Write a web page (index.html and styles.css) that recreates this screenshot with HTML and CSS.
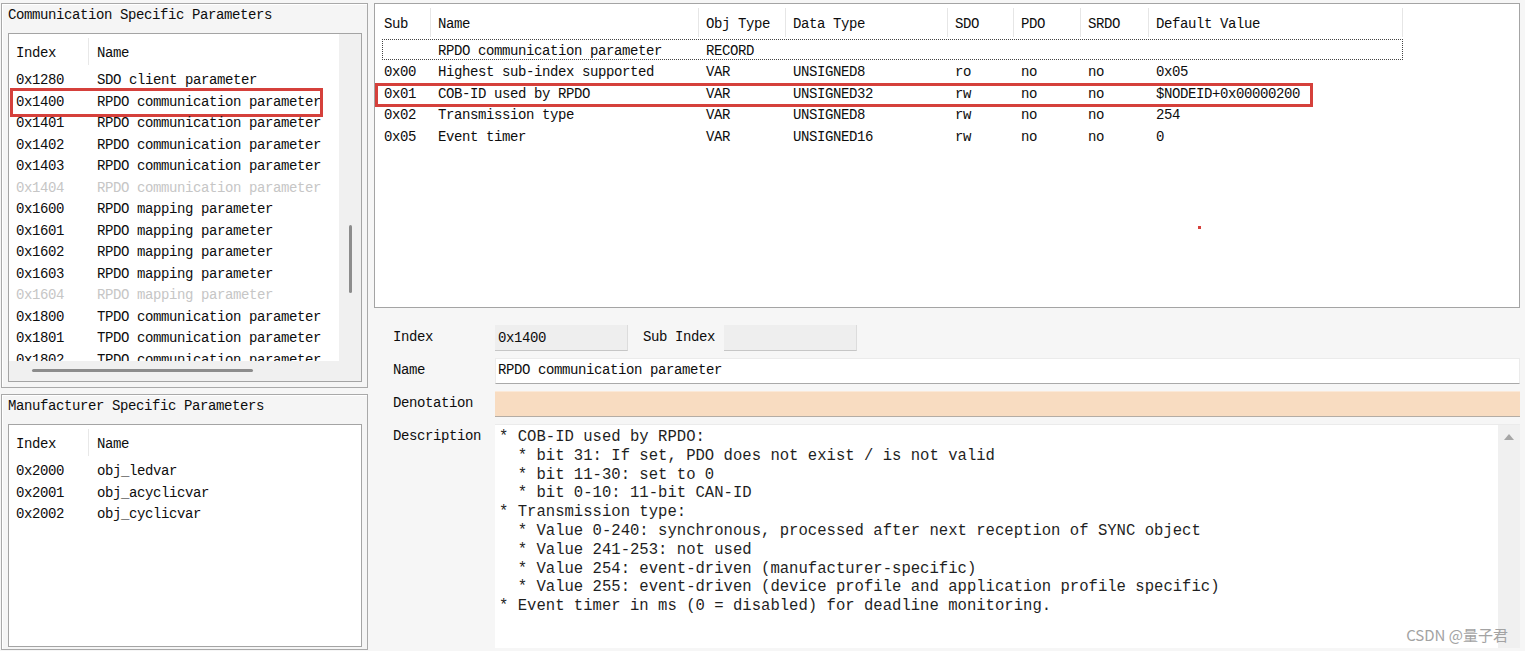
FILE: index.html
```html
<!DOCTYPE html>
<html lang="en">
<head>
<meta charset="utf-8">
<title>Object Dictionary</title>
<link rel="stylesheet" href="styles.css">
</head>
<body>
<div class="app">
  <aside class="left">
    <section class="group g1">
      <div class="gtitle">Communication Specific Parameters</div>
      <div class="listbox">
        <div class="lb-main">
          <div class="lb-head"><span class="h-idx">Index</span><span class="h-sep"></span><span class="h-name">Name</span></div>
          <div class="lb-row"><span class="i">0x1280</span><span>SDO client parameter</span></div>
          <div class="lb-row"><span class="i">0x1400</span><span>RPDO communication parameter</span><span class="mark mark-left"></span></div>
          <div class="lb-row"><span class="i">0x1401</span><span>RPDO communication parameter</span></div>
          <div class="lb-row"><span class="i">0x1402</span><span>RPDO communication parameter</span></div>
          <div class="lb-row"><span class="i">0x1403</span><span>RPDO communication parameter</span></div>
          <div class="lb-row dim"><span class="i">0x1404</span><span>RPDO communication parameter</span></div>
          <div class="lb-row"><span class="i">0x1600</span><span>RPDO mapping parameter</span></div>
          <div class="lb-row"><span class="i">0x1601</span><span>RPDO mapping parameter</span></div>
          <div class="lb-row"><span class="i">0x1602</span><span>RPDO mapping parameter</span></div>
          <div class="lb-row"><span class="i">0x1603</span><span>RPDO mapping parameter</span></div>
          <div class="lb-row dim"><span class="i">0x1604</span><span>RPDO mapping parameter</span></div>
          <div class="lb-row"><span class="i">0x1800</span><span>TPDO communication parameter</span></div>
          <div class="lb-row"><span class="i">0x1801</span><span>TPDO communication parameter</span></div>
          <div class="lb-row"><span class="i">0x1802</span><span>TPDO communication parameter</span></div>
        </div>
        <div class="vscroll"><div class="vthumb"></div></div>
        <div class="hscroll"><div class="hthumb"></div></div>
        <div class="corner"></div>
      </div>
    </section>
    <section class="group g2">
      <div class="gtitle">Manufacturer Specific Parameters</div>
      <div class="listbox plain">
        <div class="lb-head"><span class="h-idx">Index</span><span class="h-sep"></span><span class="h-name">Name</span></div>
        <div class="lb-row"><span class="i">0x2000</span><span>obj_ledvar</span></div>
        <div class="lb-row"><span class="i">0x2001</span><span>obj_acyclicvar</span></div>
        <div class="lb-row"><span class="i">0x2002</span><span>obj_cyclicvar</span></div>
      </div>
    </section>
  </aside>

  <main class="right">
    <div class="tablepane">
      <div class="thead">
        <span class="th first">Sub</span>
        <span class="th">Name</span>
        <span class="th">Obj Type</span>
        <span class="th">Data Type</span>
        <span class="th">SDO</span>
        <span class="th">PDO</span>
        <span class="th">SRDO</span>
        <span class="th last">Default Value</span>
      </div>
      <div class="tr focus">
        <span class="td first"></span><span class="td">RPDO communication parameter</span><span class="td">RECORD</span><span class="td"></span><span class="td"></span><span class="td"></span><span class="td"></span><span class="td"></span>
      </div>
      <div class="tr">
        <span class="td first">0x00</span><span class="td">Highest sub-index supported</span><span class="td">VAR</span><span class="td">UNSIGNED8</span><span class="td">ro</span><span class="td">no</span><span class="td">no</span><span class="td">0x05</span>
      </div>
      <div class="tr">
        <span class="td first">0x01</span><span class="td">COB-ID used by RPDO</span><span class="td">VAR</span><span class="td">UNSIGNED32</span><span class="td">rw</span><span class="td">no</span><span class="td">no</span><span class="td">$NODEID+0x00000200</span>
        <span class="mark mark-table"></span>
      </div>
      <div class="tr">
        <span class="td first">0x02</span><span class="td">Transmission type</span><span class="td">VAR</span><span class="td">UNSIGNED8</span><span class="td">rw</span><span class="td">no</span><span class="td">no</span><span class="td">254</span>
      </div>
      <div class="tr">
        <span class="td first">0x05</span><span class="td">Event timer</span><span class="td">VAR</span><span class="td">UNSIGNED16</span><span class="td">rw</span><span class="td">no</span><span class="td">no</span><span class="td">0</span>
      </div>
      <span class="dot"></span>
    </div>

    <div class="form">
      <div class="lbl">Index</div>
      <div class="idxrow">
        <div class="field gray w133">0x1400</div>
        <div class="lbl sublbl">Sub Index</div>
        <div class="field gray w133"></div>
      </div>
      <div class="lbl">Name</div>
      <div class="field white">RPDO communication parameter</div>
      <div class="lbl">Denotation</div>
      <div class="field peach"></div>
      <div class="lbl">Description</div>
      <div class="desc">
<pre class="desc-text">* COB-ID used by RPDO:
  * bit 31: If set, PDO does not exist / is not valid
  * bit 11-30: set to 0
  * bit 0-10: 11-bit CAN-ID
* Transmission type:
  * Value 0-240: synchronous, processed after next reception of SYNC object
  * Value 241-253: not used
  * Value 254: event-driven (manufacturer-specific)
  * Value 255: event-driven (device profile and application profile specific)
* Event timer in ms (0 = disabled) for deadline monitoring.</pre>
        <div class="dscroll"><span class="uparrow"></span></div>
        <span class="watermark">CSDN @量子君</span>
      </div>
    </div>
  </main>
</div>
</body>
</html>
```

FILE: styles.css
```css
* { box-sizing: border-box; }
html, body { margin: 0; padding: 0; }
body {
  width: 1525px;
  height: 651px;
  overflow: hidden;
  background: #f6f6f6;
  font-family: "Liberation Mono", "DejaVu Sans Mono", monospace;
  font-size: 14px;
  letter-spacing: -0.4px;
  color: #0d0d0d;
}
.app {
  display: flex;
  height: 651px;
  padding: 3px 5px 0 1px;
  gap: 6px;
}

/* ---------- left column ---------- */
.left {
  width: 367px;
  flex: none;
  display: flex;
  flex-direction: column;
  gap: 6px;
}
.group {
  border: 1px solid #a9a9a9;
  box-shadow: inset 1px 1px 0 #ffffff;
  padding: 0 5px 5px 6px;
  display: flex;
  flex-direction: column;
  background: #f5f5f5;
}
.g1 { height: 385px; }
.g2 { height: 256px; padding-bottom: 2px; }
.gtitle {
  height: 29px;
  padding-top: 2px;
  line-height: 18px;
  white-space: nowrap;
}
.listbox {
  flex: 1;
  min-height: 0;
  border: 1px solid #a4a4a4;
  background: #fff;
  display: grid;
  grid-template-columns: 1fr 22px;
  grid-template-rows: 1fr 20px;
  overflow: hidden;
}
.listbox.plain { display: block; }
.lb-main { overflow: hidden; min-width: 0; }
.lb-head {
  display: grid;
  grid-template-columns: 79px 1px 1fr;
  height: 34px;
  padding-top: 10px;
  line-height: 18px;
}
.h-idx { padding-left: 7px; }
.h-sep { background: #e8e8e8; margin-top: -6px; height: 27px; }
.h-name { padding-left: 8px; }
.lb-row {
  position: relative;
  display: grid;
  grid-template-columns: 88px 1fr;
  height: 21.5px;
  padding-top: 3px;
  line-height: 18.5px;
  white-space: nowrap;
}
.lb-row .i { padding-left: 7px; }
.lb-row.dim { color: #c6c6c6; }
.vscroll {
  grid-row: 1;
  grid-column: 2;
  background: #f0f0f0;
  display: flex;
  justify-content: center;
}
.vthumb {
  margin-top: 191px;
  width: 3px;
  height: 68px;
  background: #8c8c8c;
  border-radius: 2px;
}
.hscroll {
  grid-row: 2;
  grid-column: 1;
  background: #f0f0f0;
}
.hthumb {
  margin: 8px 0 0 23px;
  width: 221px;
  height: 3px;
  background: #8c8c8c;
  border-radius: 2px;
}
.corner { grid-row: 2; grid-column: 2; background: #f0f0f0; }

/* red annotation boxes */
.mark {
  position: absolute;
  border: 3px solid #d5403b;
  pointer-events: none;
}
.mark-left { left: 1px; top: -2px; width: 313px; height: 29px; }
.mark-table { left: -7px; top: 1px; width: 938px; height: 24px; }

/* ---------- right column ---------- */
.right {
  flex: 1;
  min-width: 0;
  display: flex;
  flex-direction: column;
}
.tablepane {
  position: relative;
  height: 305px;
  flex: none;
  border: 1px solid #a4a4a4;
  background: #fff;
  padding-left: 7px;
}
.thead, .tr {
  display: grid;
  grid-template-columns: 48px 268px 87px 162px 66px 67px 68px 255px;
  width: 1021px;
  white-space: nowrap;
}
.thead {
  margin-top: 4px;
  margin-bottom: 2px;
  height: 29px;
}
.th {
  border-left: 1px solid #e6e6e6;
  padding: 7px 0 0 7px;
  line-height: 18px;
}
.th.first { border-left: 0; padding-left: 2px; }
.th.last { border-right: 1px solid #e6e6e6; }
.tr {
  position: relative;
  height: 21.7px;
  padding-top: 3px;
  line-height: 18.7px;
}
.tr.focus {
  height: 21px;
  line-height: 18px;
  outline: 1px dotted #444;
  outline-offset: -1px;
}
.td { padding-left: 8px; }
.td.first { padding-left: 2px; }
.dot {
  position: absolute;
  left: 823px;
  top: 222px;
  width: 3px;
  height: 3px;
  background: #d5403b;
}

/* ---------- form ---------- */
.form {
  flex: 1;
  min-height: 0;
  display: grid;
  grid-template-columns: 102px 1fr;
  grid-template-rows: 26px 26px 26px 1fr;
  row-gap: 7px;
  padding: 17px 0 3px 19px;
}
.lbl {
  padding-top: 3px;
  line-height: 18px;
  white-space: nowrap;
}
.idxrow { display: flex; align-items: flex-start; }
.sublbl { margin-left: 15px; width: 81px; }
.field {
  height: 26px;
  line-height: 25px;
  padding-left: 3px;
  white-space: nowrap;
}
.w133 { width: 133px; flex: none; }
.field.gray {
  background: #eeeeee;
  border-bottom: 1px solid #c6c6c6;
  border-right: 1px solid #dcdcdc;
  line-height: 26px;
}
.field.white {
  background: #ffffff;
  border: 1px solid #ebebeb;
  border-bottom-color: #a9a9a9;
  line-height: 23px;
  padding-left: 2px;
}
.field.peach {
  background: #f8dcc1;
  border-top: 1px solid #fbe9d8;
  border-bottom: 1px solid #b4aca4;
}
.desc {
  position: relative;
  min-height: 0;
  background: #fff;
  border-top: 1px solid #ebebeb;
  display: grid;
  grid-template-columns: 1fr 22px;
  overflow: hidden;
}
.desc-text {
  margin: 0;
  padding: 3px 0 0 4px;
  font-family: "Liberation Mono", "Courier New", monospace;
  font-size: 15.6px;
  line-height: 18.8px;
  letter-spacing: 0;
  color: #1f1f1f;
  white-space: pre;
  overflow: hidden;
}
.dscroll {
  background: #f0f0f0;
  display: flex;
  justify-content: center;
}
.uparrow {
  margin-top: 9px;
  width: 0;
  height: 0;
  border-left: 5px solid transparent;
  border-right: 5px solid transparent;
  border-bottom: 6px solid #a6a6a6;
}
.watermark {
  position: absolute;
  right: 12px;
  bottom: 4px;
  font-family: "Noto Sans CJK SC", "Noto Sans", sans-serif;
  font-size: 15px;
  line-height: 18px;
  letter-spacing: 0;
  color: #a3a3a3;
  white-space: nowrap;
}
```
